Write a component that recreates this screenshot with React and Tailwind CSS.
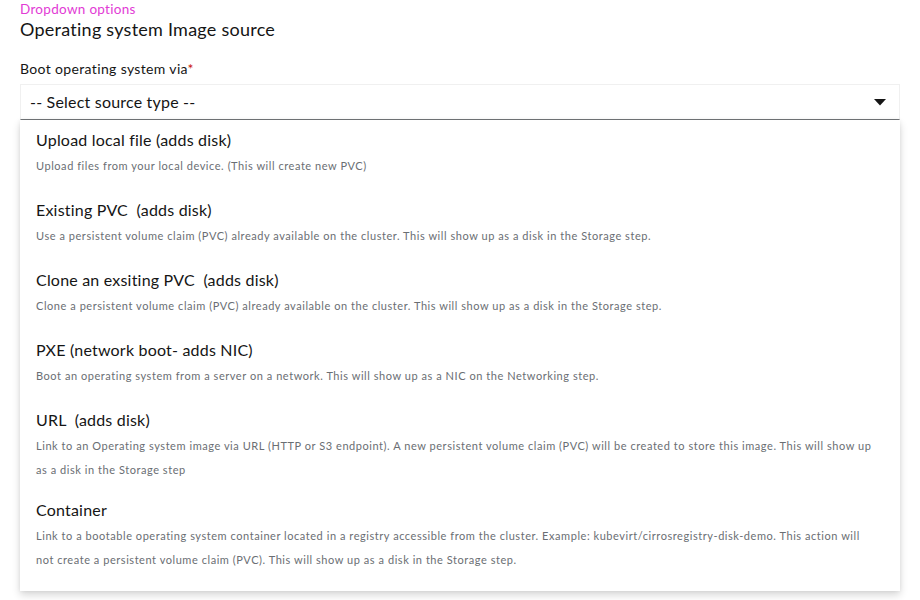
import React from 'react';

const options = [
  {
    title: 'Upload local file (adds disk)',
    lines: ['Upload files from your local device. (This will create new PVC)'],
    pad: 'pt-[10px] pb-[12px]',
  },
  {
    title: 'Existing PVC  (adds disk)',
    lines: ['Use a persistent volume claim (PVC) already available on the cluster. This will show up as a disk in the Storage step.'],
    pad: 'pt-[10px] pb-[12px]',
  },
  {
    title: 'Clone an exsiting PVC  (adds disk)',
    lines: ['Clone a persistent volume claim (PVC) already available on the cluster. This will show up as a disk in the Storage step.'],
    pad: 'pt-[10px] pb-[12px]',
  },
  {
    title: 'PXE (network boot- adds NIC)',
    lines: ['Boot an operating system from a server on a network. This will show up as a NIC on the Networking step.'],
    pad: 'pt-[10px] pb-[12px]',
  },
  {
    title: 'URL  (adds disk)',
    lines: [
      'Link to an Operating system image via URL (HTTP or S3 endpoint). A new persistent volume claim (PVC) will be created to store this image. This will show up',
      'as a disk in the Storage step',
    ],
    pad: 'pt-[10px] pb-[10px]',
  },
  {
    title: 'Container',
    lines: [
      'Link to a bootable operating system container located in a registry accessible from the cluster. Example: kubevirt/cirrosregistry-disk-demo. This action will',
      'not create a persistent volume claim (PVC). This will show up as a disk in the Storage step.',
    ],
    pad: 'pt-[8px] pb-[19px]',
  },
];

const App = () => {
  return (
    <div className="min-h-screen w-[920px] h-[600px] bg-white px-5 font-['Lato','Liberation_Sans',sans-serif] text-[#151515] overflow-hidden">
      {/* Heading */}
      <p className="text-[13.5px] leading-[18px] tracking-[0.3px] text-[#e23bd5]">Dropdown options</p>
      <h1 className="text-[18px] leading-[22px] tracking-[0.25px]">Operating system Image source</h1>

      {/* Field */}
      <div className="mt-[20px]">
        <label className="block text-[14px] leading-[18px] tracking-[0.35px]">
          Boot operating system via<span className="text-[#c9190b]">*</span>
        </label>
        <div className="mt-[6px] h-[36px] flex items-center justify-between pl-[9px] pr-[13px] border border-[#f0f0f0] border-b-[#737679]">
          <span className="text-[16px] tracking-[0.2px]">-- Select source type --</span>
          <svg width="12" height="7" viewBox="0 0 12 7" className="fill-[#151515]">
            <path d="M0 0 L12 0 L6 6.5 Z" />
          </svg>
        </div>

        {/* Menu */}
        <div className="bg-white shadow-[0_4px_8px_rgba(3,3,3,0.16),0_0_4px_rgba(3,3,3,0.06)]">
          {options.map((opt) => (
            <div key={opt.title} className={`px-4 ${opt.pad}`}>
              <p className="text-[16px] leading-[20px] whitespace-pre tracking-[0.2px]">{opt.title}</p>
              <div className="mt-[4px] text-[11px] leading-[24px] text-[#6a6e73] tracking-[0.55px]">
                {opt.lines.map((line) => (
                  <p key={line} className="whitespace-nowrap">{line}</p>
                ))}
              </div>
            </div>
          ))}
        </div>
      </div>
    </div>
  );
};

export default App;
